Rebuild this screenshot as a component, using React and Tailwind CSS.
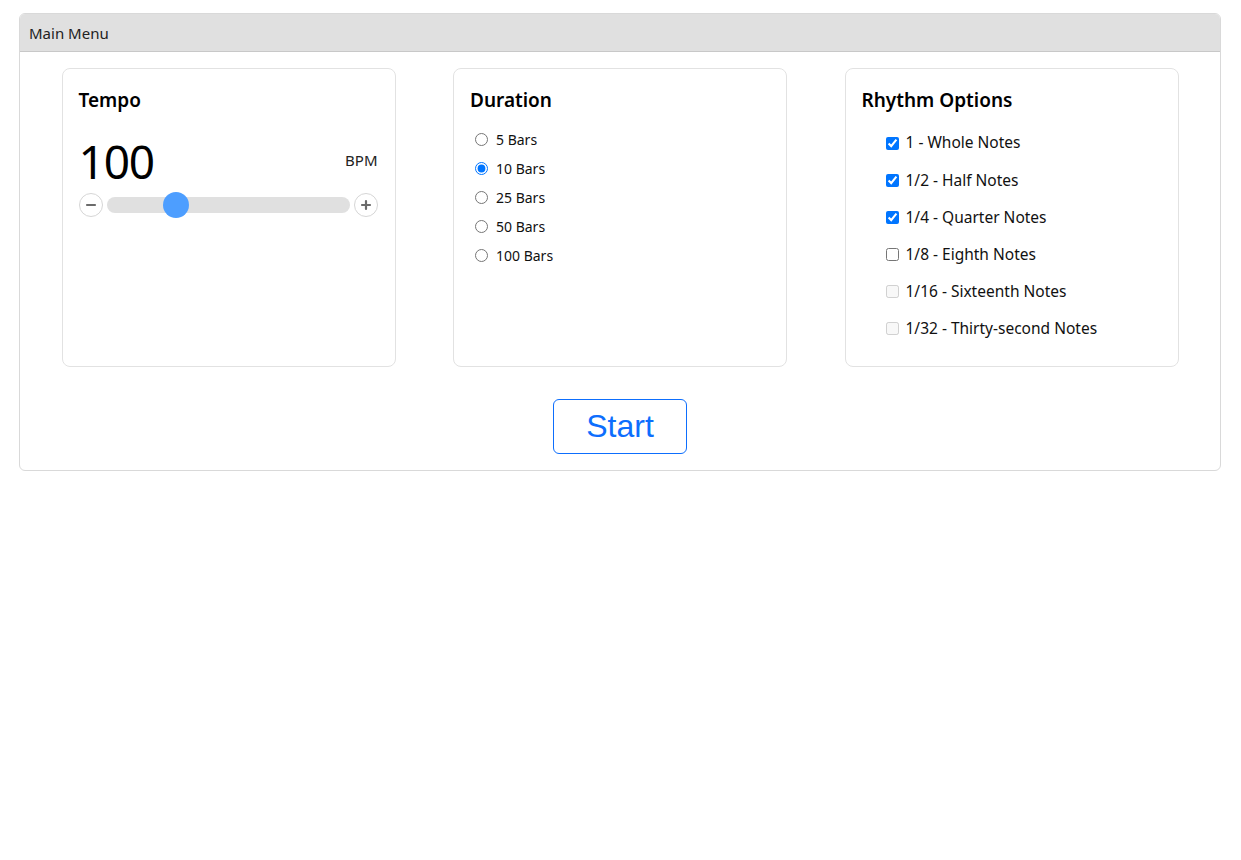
import { useState } from 'react'

const durations = ['5 Bars', '10 Bars', '25 Bars', '50 Bars', '100 Bars']

const rhythms = [
  { label: '1 - Whole Notes', checked: true },
  { label: '1/2 - Half Notes', checked: true },
  { label: '1/4 - Quarter Notes', checked: true },
  { label: '1/8 - Eighth Notes', checked: false },
  { label: '1/16 - Sixteenth Notes', checked: false, disabled: true },
  { label: '1/32 - Thirty-second Notes', checked: false, disabled: true },
]

function Card({ title, children }) {
  return (
    <div className="w-[334px] h-[299px] rounded-lg border border-[#e2e2e2] bg-white px-4 pt-[17px]">
      <h2 className="text-[19px] font-semibold leading-[28px] text-black">{title}</h2>
      {children}
    </div>
  )
}

export default function App() {
  const [tempo, setTempo] = useState(100)
  const [duration, setDuration] = useState('10 Bars')
  const [checks, setChecks] = useState(rhythms.map((r) => r.checked))

  const pct = ((tempo - 40) / (250 - 40)) * 100

  return (
    <div className="min-h-screen bg-white pt-[13px] pl-[19px] pr-[20px]" style={{ fontFamily: '"Noto Sans", "Open Sans", sans-serif' }}>
      <div className="rounded-md border border-[#d9d9d9] overflow-hidden">
        <div className="h-[38px] bg-[#e0e0e0] border-b border-[#c8c8c8] px-[9px] pt-px flex items-center text-[15px] text-[#222]">
          Main Menu
        </div>
        <div className="pt-[16px] pb-[16px]">
          <div className="flex justify-center gap-[57.5px]">
            <Card title="Tempo">
              <div className="mt-[21px] flex items-start justify-between">
                <span className="text-[46px] leading-[52px] text-black tracking-tight">{tempo}</span>
                <span className="text-[15px] leading-[20px] mt-[15px] text-[#222] pr-px">BPM</span>
              </div>
              <div className="mt-[6px] flex items-center gap-1">
                <button
                  onClick={() => setTempo(Math.max(40, tempo - 1))}
                  className="w-[24px] h-[24px] shrink-0 rounded-full border border-[#d6d6d6] bg-white flex items-center justify-center"
                >
                  <svg width="12" height="12" viewBox="0 0 12 12">
                    <path d="M2 6h8" stroke="#6b6b6b" strokeWidth="2.2" strokeLinecap="round" />
                  </svg>
                </button>
                <div className="relative flex-1 h-[16px] rounded-full bg-[#e0e0e0]">
                  <div
                    className="absolute top-1/2 w-[26px] h-[26px] -translate-x-1/2 -translate-y-1/2 rounded-full bg-[#4d9eff]"
                    style={{ left: `${pct}%` }}
                  />
                </div>
                <button
                  onClick={() => setTempo(Math.min(250, tempo + 1))}
                  className="w-[24px] h-[24px] shrink-0 rounded-full border border-[#d6d6d6] bg-white flex items-center justify-center mr-px"
                >
                  <svg width="12" height="12" viewBox="0 0 12 12">
                    <path d="M2 6h8M6 2v8" stroke="#6b6b6b" strokeWidth="2.2" strokeLinecap="round" />
                  </svg>
                </button>
              </div>
            </Card>

            <Card title="Duration">
              <div className="mt-[15px] flex flex-col gap-[9px]">
                {durations.map((d) => (
                  <label key={d} className="flex items-center h-[20px] text-[14px] text-[#111]">
                    <input
                      type="radio"
                      name="duration"
                      checked={duration === d}
                      onChange={() => setDuration(d)}
                      className="ml-[5px] mr-[8px] w-[13px] h-[13px]"
                    />
                    {d}
                  </label>
                ))}
              </div>
            </Card>

            <Card title="Rhythm Options">
              <div className="mt-[19px] pl-[24px] flex flex-col gap-[17.2px]">
                {rhythms.map((r, i) => (
                  <label key={r.label} className="flex items-center h-[20px] text-[15.5px] text-[#111]">
                    <input
                      type="checkbox"
                      checked={checks[i]}
                      disabled={r.disabled}
                      onChange={() => setChecks(checks.map((c, j) => (j === i ? !c : c)))}
                      className="mr-[7px] w-[13px] h-[13px]"
                    />
                    {r.label}
                  </label>
                ))}
              </div>
            </Card>
          </div>
          <div className="mt-[32px] flex justify-center">
            <button
              className="w-[134px] h-[55px] rounded-md border border-[#0d6efd] bg-white text-[32px] leading-none pb-[2px] text-[#0d6efd]"
              style={{ fontFamily: '"Liberation Sans", Arial, sans-serif' }}
            >
              Start
            </button>
          </div>
        </div>
      </div>
    </div>
  )
}
